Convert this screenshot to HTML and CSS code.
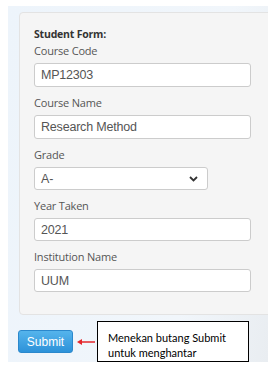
FILE: index.html
```html
<!DOCTYPE html>
<html lang="en">
<head>
    <meta charset="UTF-8">
    <meta name="viewport" content="width=device-width, initial-scale=1.0">
    <title>Student Form</title>
    <link rel="stylesheet" href="styles.css">
</head>
<body>
    <div class="frame">
        <div class="well">
            <div class="form-title">Student Form:</div>

            <div class="field">
                <div class="label">Course Code</div>
                <div class="input">MP12303</div>
            </div>
            <div class="field">
                <div class="label">Course Name</div>
                <div class="input">Research Method</div>
            </div>
            <div class="field small">
                <div class="label">Grade</div>
                <div class="input select">
                    <span>A-</span>
                    <svg width="9" height="6" viewBox="0 0 9 6"><path d="M1 1 L4.5 4.5 L8 1" fill="none" stroke="#333" stroke-width="1.8"/></svg>
                </div>
            </div>
            <div class="field small">
                <div class="label">Year Taken</div>
                <div class="input">2021</div>
            </div>
            <div class="field small">
                <div class="label">Institution Name</div>
                <div class="input">UUM</div>
            </div>
        </div>

        <div class="actions">
            <div class="btn-submit">Submit</div>
            <svg class="arrow" width="20" height="10" viewBox="0 0 20 10">
                <line x1="5" y1="5" x2="19" y2="5" stroke="#e4262b" stroke-width="1.5"/>
                <path d="M1 5 L6 2 L6 8 Z" fill="#e4262b"/>
            </svg>
            <div class="callout">Menekan butang Submit<br>untuk menghantar</div>
        </div>
    </div>
</body>
</html>
```

FILE: styles.css
```css
body {
    margin: 0;
    background: #fff;
}
.frame {
    margin: 6px 0 0 8px;
    width: 260px;
    height: 356px;
    padding-top: 6px;
    box-sizing: border-box;
    overflow: hidden;
    background: linear-gradient(100deg, #edf4fb 0%, #f1f6fb 70%, #e9edf1 100%);
}
.well {
    margin-left: 11px;
    width: 270px;
    height: 303px;
    box-sizing: border-box;
    padding: 14px 0 0 14px;
    background: #f5f5f5;
    border: 1px solid #e3e3e3;
    border-radius: 4px;
}
.form-title {
    font-family: "Open Sans", sans-serif;
    font-weight: bold;
    font-size: 10.5px;
    line-height: 15px;
    color: #333;
    letter-spacing: -0.2px;
}
.field {
    margin-bottom: 7px;
}
.label {
    font-family: "Open Sans", sans-serif;
    font-size: 11px;
    line-height: 17px;
    color: #555;
    margin-bottom: 4px;
    letter-spacing: -0.2px;
}
.input {
    width: 217px;
    height: 24px;
    box-sizing: border-box;
    padding: 0 6px;
    background: #fff;
    border: 1px solid #ccc;
    border-radius: 3px;
    font-family: "Liberation Sans", Arial, sans-serif;
    font-size: 12.5px;
    letter-spacing: -0.2px;
    color: #555;
    display: flex;
    align-items: center;
}
.small .input {
    height: 23px;
}
.select {
    width: 174px;
    justify-content: space-between;
    padding-right: 9px;
}
.actions {
    display: flex;
    align-items: center;
    margin-top: 6px;
    padding-left: 10px;
}
.btn-submit {
    width: 55px;
    height: 23px;
    box-sizing: border-box;
    border: 1px solid #2b88cc;
    border-radius: 3px;
    background: linear-gradient(#55b4ec, #2d92d9);
    color: #fff;
    font-family: "Liberation Sans", Arial, sans-serif;
    font-size: 12px;
    display: flex;
    align-items: center;
    justify-content: center;
}
.arrow {
    margin: 0 1px 0 3px;
}
.callout {
    width: 152px;
    height: 41px;
    box-sizing: border-box;
    padding: 8px 0 0 10px;
    background: #fff;
    border: 1px solid #000;
    font-family: Lato, sans-serif;
    font-size: 11px;
    line-height: 15px;
    color: #000;
}
```
